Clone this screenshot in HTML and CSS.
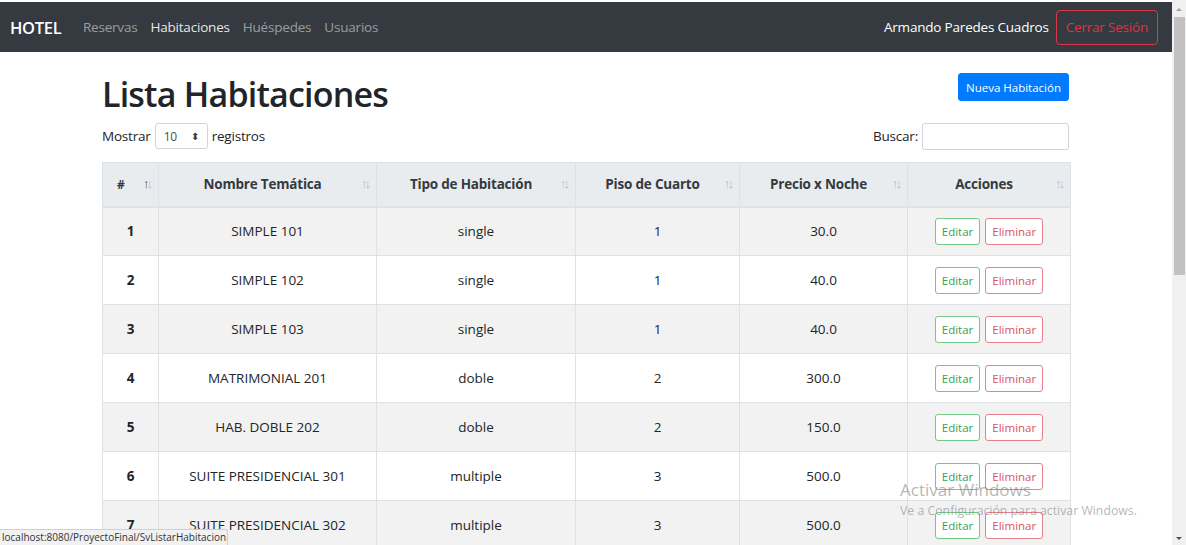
FILE: index.html
```html
<!DOCTYPE html>
<html lang="es">
<head>
<meta charset="utf-8">
<title>Lista Habitaciones</title>
<link rel="stylesheet" href="styles.css">
</head>
<body>
<div class="page">
  <nav class="navbar">
    <a class="brand" href="#">HOTEL</a>
    <ul class="nav-links">
      <li><a href="#">Reservas</a></li>
      <li><a class="active" href="#">Habitaciones</a></li>
      <li><a href="#">Huéspedes</a></li>
      <li><a href="#">Usuarios</a></li>
    </ul>
    <div class="nav-right">
      <span class="user">Armando Paredes Cuadros</span>
      <button class="btn-logout">Cerrar Sesión</button>
    </div>
  </nav>

  <main class="container">
    <div class="head-row">
      <h1>Lista Habitaciones</h1>
      <button class="btn-primary">Nueva Habitación</button>
    </div>
    <div class="controls">
      <label class="length">Mostrar
        <span class="select">10 <span class="caret">&#x2B0D;</span></span>
        registros</label>
      <label class="search">Buscar: <span class="input"></span></label>
    </div>

    <table class="table">
      <colgroup>
        <col class="c1"><col class="c2"><col class="c3"><col class="c4"><col class="c5"><col class="c6">
      </colgroup>
      <thead>
        <tr>
          <th class="sorted">#<span class="sort"><i class="on">↑</i><i>↓</i></span></th>
          <th>Nombre Temática<span class="sort"><i>↑</i><i>↓</i></span></th>
          <th>Tipo de Habitación<span class="sort"><i>↑</i><i>↓</i></span></th>
          <th>Piso de Cuarto<span class="sort"><i>↑</i><i>↓</i></span></th>
          <th>Precio x Noche<span class="sort"><i>↑</i><i>↓</i></span></th>
          <th>Acciones<span class="sort"><i>↑</i><i>↓</i></span></th>
        </tr>
      </thead>
      <tbody>
        <tr><td class="num">1</td><td>SIMPLE 101</td><td>single</td><td>1</td><td>30.0</td><td><span class="btn-edit">Editar</span><span class="btn-del">Eliminar</span></td></tr>
        <tr><td class="num">2</td><td>SIMPLE 102</td><td>single</td><td>1</td><td>40.0</td><td><span class="btn-edit">Editar</span><span class="btn-del">Eliminar</span></td></tr>
        <tr><td class="num">3</td><td>SIMPLE 103</td><td>single</td><td>1</td><td>40.0</td><td><span class="btn-edit">Editar</span><span class="btn-del">Eliminar</span></td></tr>
        <tr><td class="num">4</td><td>MATRIMONIAL 201</td><td>doble</td><td>2</td><td>300.0</td><td><span class="btn-edit">Editar</span><span class="btn-del">Eliminar</span></td></tr>
        <tr><td class="num">5</td><td>HAB. DOBLE 202</td><td>doble</td><td>2</td><td>150.0</td><td><span class="btn-edit">Editar</span><span class="btn-del">Eliminar</span></td></tr>
        <tr><td class="num">6</td><td>SUITE PRESIDENCIAL 301</td><td>multiple</td><td>3</td><td>500.0</td><td><span class="btn-edit">Editar</span><span class="btn-del">Eliminar</span></td></tr>
        <tr><td class="num">7</td><td>SUITE PRESIDENCIAL 302</td><td>multiple</td><td>3</td><td>500.0</td><td><span class="btn-edit">Editar</span><span class="btn-del">Eliminar</span></td></tr>
      </tbody>
    </table>
  </main>
</div>

<div class="watermark">
  <div class="wm-title">Activar Windows</div>
  <div class="wm-sub">Ve a Configuración para activar Windows.</div>
</div>

<div class="statusbar">localhost:8080/ProyectoFinal/SvListarHabitacion</div>

<div class="scrollbar">
  <span class="arrow up"></span>
  <span class="thumb"></span>
  <span class="arrow down"></span>
</div>
</body>
</html>
```

FILE: styles.css
```css
* { box-sizing: border-box; }

html, body {
  margin: 0;
  height: 545px;
  overflow: hidden;
  background: #fff;
}

body {
  font-family: "Open Sans", "Noto Sans", sans-serif;
  font-size: 13.5px;
  color: #212529;
  padding-top: 2px;
}

.page {
  width: 1172px;
}

/* NAVBAR */
.navbar {
  height: 50px;
  background: #343a40;
  display: flex;
  align-items: center;
  padding: 0 14px 0 10px;
}
.brand {
  color: #fff;
  font-size: 16.5px;
  font-weight: 600;
  text-decoration: none;
  margin-right: 15px;
  letter-spacing: -0.3px;
}
.nav-links {
  list-style: none;
  margin: 0;
  padding: 0;
  display: flex;
}
.nav-links a {
  display: block;
  padding: 0 6.5px;
  color: rgba(255,255,255,.5);
  text-decoration: none;
  letter-spacing: -0.2px;
}
.nav-links a.active {
  color: rgba(255,255,255,.9);
}
.nav-right {
  margin-left: auto;
  display: flex;
  align-items: center;
  gap: 7px;
}
.user { color: #fff; letter-spacing: -0.2px; }
.btn-logout {
  font-family: inherit;
  font-size: 13.5px;
  color: #dc3545;
  background: transparent;
  border: 1px solid #dc3545;
  border-radius: 4px;
  height: 35px;
  padding: 0 9px;
  letter-spacing: -0.2px;
}

/* CONTAINER */
.container {
  width: 968px;
  margin: 0 auto;
}
.head-row {
  display: flex;
  justify-content: space-between;
  align-items: flex-start;
  padding-top: 21px;
}
h1 {
  margin: 0;
  font-size: 34px;
  font-weight: 600;
  line-height: 43px;
  letter-spacing: -0.8px;
}
.btn-primary {
  font-family: inherit;
  font-size: 11.5px;
  font-weight: 500;
  color: #fff;
  background: #007bff;
  border: 1px solid #007bff;
  border-radius: 3px;
  height: 28px;
  padding: 0 7px;
  margin-top: 0;
  margin-right: 1px;
}

.controls {
  display: flex;
  justify-content: space-between;
  align-items: center;
  margin-top: 7px;
  height: 26px;
}
.length, .search {
  display: flex;
  align-items: center;
  gap: 4px;
  letter-spacing: -0.2px;
}
.select {
  display: inline-flex;
  align-items: center;
  justify-content: space-between;
  width: 53px;
  height: 26px;
  border: 1px solid #ced4da;
  border-radius: 3px;
  padding: 0 8px;
  font-size: 12px;
  color: #495057;
}
.caret {
  font-size: 10px;
  color: #343a40;
}
.input {
  display: inline-block;
  width: 147px;
  height: 27px;
  border: 1px solid #ced4da;
  border-radius: 3px;
  margin-right: 1px;
}

/* TABLE */
.table {
  width: 968px;
  margin-top: 13px;
  border-collapse: collapse;
  table-layout: fixed;
}
.c1 { width: 56px; }
.c2 { width: 218px; }
.c3 { width: 199px; }
.c4 { width: 164px; }
.c5 { width: 168px; }
.c6 { width: 163px; }

.table th, .table td {
  border: 1px solid #dee2e6;
  text-align: center;
  vertical-align: middle;
}
.table th {
  background: #e9ecef;
  height: 44px;
  font-weight: 700;
  color: #343a40;
  position: relative;
  padding: 0 20px 0 10px;
  border-bottom-width: 2px;
  letter-spacing: -0.2px;
}
.table th.sorted {
  text-align: left;
  padding-left: 14px;
  font-size: 12px;
}
.sort {
  position: absolute;
  right: 8px;
  top: 50%;
  transform: translateY(-58%);
  font-size: 13px;
  font-weight: 400;
  color: #343a40;
  letter-spacing: -3px;
}
.sort i {
  font-style: normal;
  opacity: .3;
}
.sort i.on { opacity: .85; }

.table td {
  height: 49px;
  padding: 0 8px;
}
.table tbody tr:nth-child(odd) td {
  background: #f2f2f2;
}
.table td.num {
  font-weight: 700;
}

.btn-edit, .btn-del {
  display: inline-flex;
  align-items: center;
  height: 27px;
  padding: 0 6px;
  font-size: 11.5px;
  border-radius: 3px;
  border: 1px solid;
  background: #fff;
  vertical-align: middle;
}
.btn-edit {
  color: #3a9f53;
  border-color: #72c985;
  margin-right: 5px;
}
.btn-del {
  color: #d9525f;
  border-color: #e6818b;
}

/* OVERLAYS */
.watermark {
  position: absolute;
  left: 900px;
  top: 480px;
  color: rgba(120,120,120,.55);
  pointer-events: none;
  font-family: "Open Sans", sans-serif;
}
.wm-title {
  font-size: 17px;
  line-height: 20px;
}
.wm-sub {
  font-size: 12.3px;
  line-height: 16px;
  margin-top: 3px;
}

.statusbar {
  position: absolute;
  left: 0;
  top: 529px;
  height: 16px;
  width: 228px;
  background: #f1f1f1;
  border: 1px solid #cfcfcf;
  border-left: 0;
  border-bottom: 0;
  border-radius: 0 3px 0 0;
  color: #333;
  font-size: 10px;
  line-height: 15px;
  padding-left: 2px;
  white-space: nowrap;
  overflow: hidden;
}

.scrollbar {
  position: absolute;
  top: 0;
  right: 0;
  width: 14px;
  height: 545px;
  background: #f0f0f0;
}
.thumb {
  position: absolute;
  left: 2px;
  right: 1px;
  top: 17px;
  height: 258px;
  background: #c1c1c1;
}
.arrow {
  position: absolute;
  left: 4px;
  width: 0;
  height: 0;
  border-left: 3px solid transparent;
  border-right: 3px solid transparent;
}
.arrow.up {
  top: 8px;
  border-bottom: 3px solid #a3a3a3;
}
.arrow.down {
  bottom: 5px;
  border-top: 3px solid #505050;
}
```
